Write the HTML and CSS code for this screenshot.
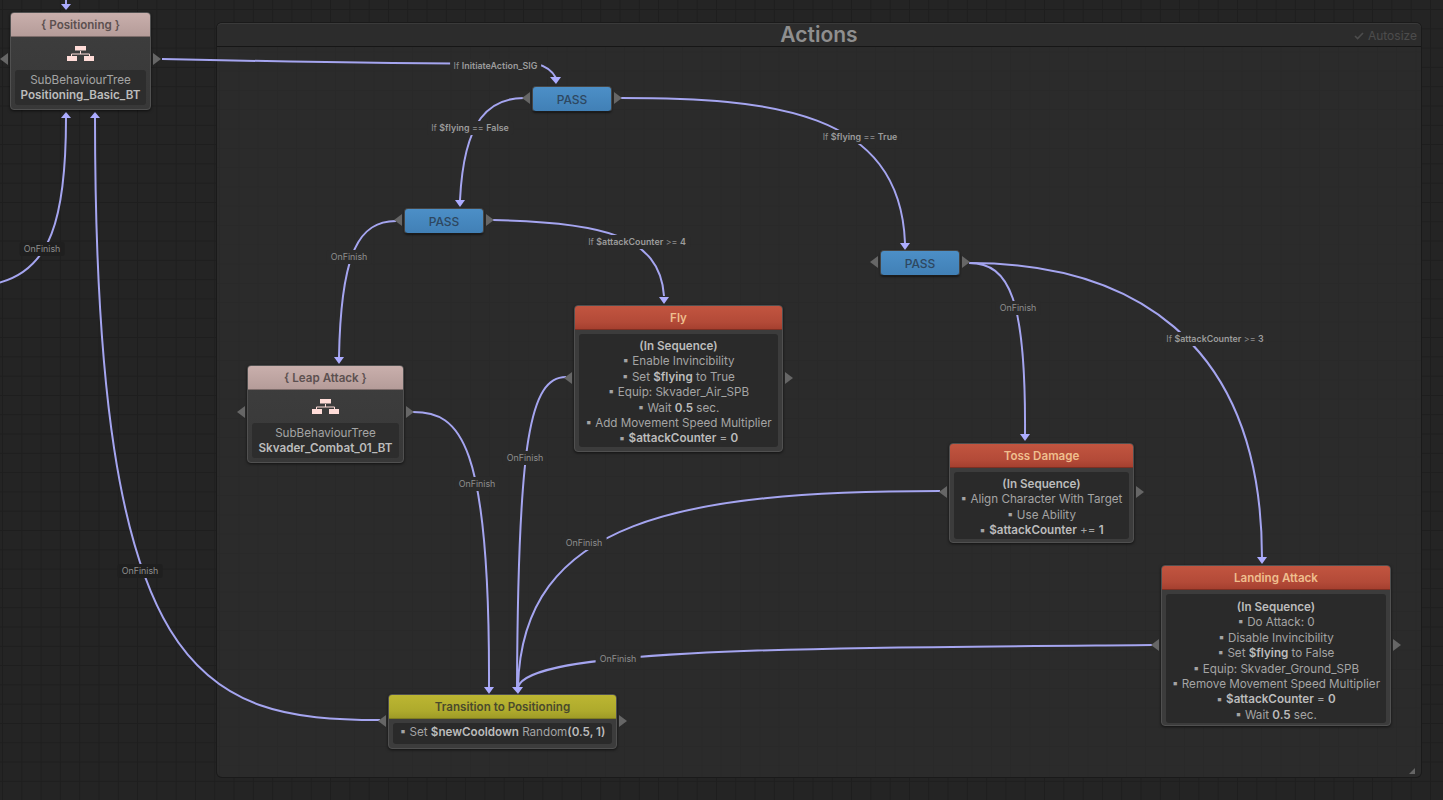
FILE: index.html
```html
<!DOCTYPE html>
<html lang="en">
<head>
<meta charset="utf-8">
<title>Behaviour graph</title>
<link rel="stylesheet" href="styles.css">
</head>
<body>
<main class="canvas">
  <section class="group">
    <header class="group-head">
      <h1 class="group-title">Actions</h1>
      <span class="autosize"><svg class="check" viewBox="0 0 10 8"><path d="M1 4l2.600 2.600L9 1" fill="none" stroke="currentColor" stroke-width="1.600"/></svg>Autosize</span>
    </header>
    <span class="resize"></span>
  </section>

  <svg class="edges" viewBox="0 0 1443 800">
    <g fill="none" stroke="#a5a5f0" stroke-width="2">
      <path d="M162 59C300 62 400 64 537 64C545 66 552 70 556 78"/>
      <path d="M524 98C490 98 464 118 460 200"/>
      <path d="M621 98C770 98 900 110 905 243"/>
      <path d="M396 221C360 221 341 250 339 357"/>
      <path d="M493 220C600 222 660 235 664 296"/>
      <path d="M969 263C1010 263 1026 300 1025 434"/>
      <path d="M969 263C1125 263 1262 335 1262 558"/>
      <path d="M413 412C460 412 490 440 489 687"/>
      <path d="M566 377C530 377 518 440 517 687"/>
      <path d="M940 491C680 491 522 520 518 687"/>
      <path d="M1152 645C800 648 530 648 518 687"/>
      <path d="M380 720C200 720 95 680 95 118"/>
      <path d="M-2 283C50 270 66 220 66 118"/>
      <path d="M66 0V4"/>
    </g>
    <g fill="#acacff">
      <path d="M61 4h10l-5 6z"/>
      <path d="M61 118h10l-5-6z"/>
      <path d="M90 118h10l-5-6z"/>
      <path d="M550 77h11l-5 7z"/>
      <path d="M455 200h10l-5 7z"/>
      <path d="M900 243h10l-5 7z"/>
      <path d="M334 357h10l-5 7z"/>
      <path d="M659 297h10l-5 7z"/>
      <path d="M1020 434h10l-5 7z"/>
      <path d="M1257 557h10l-5 7z"/>
      <path d="M484 687h10l-5 7z"/>
      <path d="M512 687h11l-5 7z"/>
    </g>
  </svg>

  <span class="edge-label l-init">If <b>InitiateAction_SIG</b></span>
  <span class="edge-label l-false">If <b>$flying</b> == <b>False</b></span>
  <span class="edge-label l-true">If <b>$flying</b> == <b>True</b></span>
  <span class="edge-label l-c4">If <b>$attackCounter</b> &gt;= <b>4</b></span>
  <span class="edge-label l-c3">If <b>$attackCounter</b> &gt;= <b>3</b></span>
  <span class="edge-label l-of1">OnFinish</span>
  <span class="edge-label l-of2">OnFinish</span>
  <span class="edge-label l-of3">OnFinish</span>
  <span class="edge-label l-of4">OnFinish</span>
  <span class="edge-label l-of5">OnFinish</span>
  <span class="edge-label l-of6">OnFinish</span>
  <span class="edge-label l-of7">OnFinish</span>
  <span class="edge-label l-of8">OnFinish</span>

  <article class="node sub n-positioning">
    <i class="port in"></i><i class="port out"></i>
    <h2 class="node-head">{ Positioning }</h2>
    <div class="tree-wrap"><svg class="tree" viewBox="0 0 27 16"><path d="M13.500 5v3M4.500 11V8h18v3" fill="none" stroke="#ffdcd8"/><path d="M8 0h11v4.500H8zM0 10h10v5H0zM17 10h10v5H17z" fill="#ffdcd8"/></svg></div>
    <div class="node-body"><p>SubBehaviourTree</p><p><b>Positioning_Basic_BT</b></p></div>
  </article>

  <article class="node sub n-leap">
    <i class="port in"></i><i class="port out"></i>
    <h2 class="node-head">{ Leap Attack }</h2>
    <div class="tree-wrap"><svg class="tree" viewBox="0 0 27 16"><path d="M13.500 5v3M4.500 11V8h18v3" fill="none" stroke="#ffdcd8"/><path d="M8 0h11v4.500H8zM0 10h10v5H0zM17 10h10v5H17z" fill="#ffdcd8"/></svg></div>
    <div class="node-body"><p>SubBehaviourTree</p><p><b>Skvader_Combat_01_BT</b></p></div>
  </article>

  <article class="node red n-fly">
    <i class="port in"></i><i class="port out"></i>
    <h2 class="node-head">Fly</h2>
    <div class="node-body">
      <p><b>(In Sequence)</b></p>
      <p>▪ Enable Invincibility</p>
      <p>▪ Set <b>$flying</b> to True</p>
      <p>▪ Equip: Skvader_Air_SPB</p>
      <p>▪ Wait <b>0.5</b> sec.</p>
      <p>▪ Add Movement Speed Multiplier</p>
      <p>▪ <b>$attackCounter</b> = <b>0</b></p>
    </div>
  </article>

  <article class="node red n-toss">
    <i class="port in"></i><i class="port out"></i>
    <h2 class="node-head">Toss Damage</h2>
    <div class="node-body">
      <p><b>(In Sequence)</b></p>
      <p>▪ Align Character With Target</p>
      <p>▪ Use Ability</p>
      <p>▪ <b>$attackCounter</b> += <b>1</b></p>
    </div>
  </article>

  <article class="node red n-landing">
    <i class="port in"></i><i class="port out"></i>
    <h2 class="node-head">Landing Attack</h2>
    <div class="node-body">
      <p><b>(In Sequence)</b></p>
      <p>▪ Do Attack: 0</p>
      <p>▪ Disable Invincibility</p>
      <p>▪ Set <b>$flying</b> to False</p>
      <p>▪ Equip: Skvader_Ground_SPB</p>
      <p>▪ Remove Movement Speed Multiplier</p>
      <p>▪ <b>$attackCounter</b> = <b>0</b></p>
      <p>▪ Wait <b>0.5</b> sec.</p>
    </div>
  </article>

  <article class="node yellow n-transition">
    <i class="port in"></i><i class="port out"></i>
    <h2 class="node-head">Transition to Positioning</h2>
    <div class="node-body">
      <p>▪ Set <b>$newCooldown</b> Random<b>(0.5, 1)</b></p>
    </div>
  </article>

  <article class="pass p-1"><i class="port in"></i><i class="port out"></i>PASS</article>
  <article class="pass p-2"><i class="port in"></i><i class="port out"></i>PASS</article>
  <article class="pass p-3"><i class="port in"></i><i class="port out"></i>PASS</article>
</main>
</body>
</html>
```
FILE: styles.css
```css
* { box-sizing: border-box; }
html, body { margin: 0; padding: 0; height: 100%; overflow: hidden; }
body { font-family: Inter, "Liberation Sans", sans-serif; background: #232323; }
b { font-weight: 700; }
p { margin: 0; }

.canvas {
  position: relative;
  width: 1443px;
  height: 800px;
  overflow: hidden;
  background-color: #242424;
  background-image:
    linear-gradient(#1e1e1e 1px, transparent 1px),
    linear-gradient(90deg, #1e1e1e 1px, transparent 1px);
  background-size: 19.300px 19.300px;
  background-position: 2px 9px;
}

.group {
  position: absolute;
  left: 217px;
  top: 23px;
  width: 1204px;
  height: 754px;
  background-color: #2b2b2b;
  background-image:
    linear-gradient(#292929 1px, transparent 1px),
    linear-gradient(90deg, #292929 1px, transparent 1px);
  background-size: 19.300px 19.300px;
  background-position: 2px 9px;
  border-radius: 5px;
  box-shadow: 0 0 0 1px #1a1a1a;
}
.group-head {
  display: flex;
  align-items: center;
  justify-content: center;
  height: 24px;
  position: relative;
  background: #2c2c2c;
  border-top: 1px solid #3a3a3a;
  border-bottom: 1px solid #161616;
  border-radius: 5px 5px 0 0;
}
.group-title { margin: 0; font-size: 21px; font-weight: 600; color: #8f8f8f; line-height: 22px; }
.autosize {
  position: absolute;
  right: 4px;
  top: 5px;
  display: flex;
  align-items: center;
  gap: 4px;
  font-size: 12px;
  line-height: 14px;
  color: #4c4c4c;
}
.check { width: 10px; height: 8px; }
.resize {
  position: absolute;
  right: 6px;
  bottom: 3px;
  width: 0;
  height: 0;
  border-left: 6px solid transparent;
  border-bottom: 6px solid #666;
}

.edges { position: absolute; left: 0; top: 0; width: 1443px; height: 800px; pointer-events: none; }

.edge-label {
  position: absolute;
  transform: translate(-50%, -50%);
  padding: 1px 4px;
  font-size: 8.900px;
  line-height: 12px;
  color: #8e8e8e;
  background: #2b2b2b;
  border-radius: 2px;
  white-space: nowrap;
}
.edge-label b { color: #9c9c9c; font-weight: 600; }
.l-init { left: 495.500px; top: 66px; }
.l-false { left: 470px; top: 128px; }
.l-true { left: 860px; top: 137px; }
.l-c4 { left: 637px; top: 242px; }
.l-c3 { left: 1215px; top: 339px; }
.l-of1 { left: 42px; top: 249px; background: #1f1f1f; }
.l-of2 { left: 349px; top: 257px; }
.l-of3 { left: 1018px; top: 308px; }
.l-of4 { left: 525px; top: 458px; }
.l-of5 { left: 477px; top: 484px; }
.l-of6 { left: 584px; top: 543px; }
.l-of7 { left: 140px; top: 571px; background: #1f1f1f; }
.l-of8 { left: 618px; top: 659px; }

.node {
  position: absolute;
  display: flex;
  flex-direction: column;
  background: #3c3c3c;
  border: 1px solid #505050;
  border-radius: 4px;
  box-shadow: 0 1px 3px rgba(0,0,0,.6);
}
.node-head {
  margin: 0;
  flex: 0 0 24px;
  padding-top: 1px;
  display: flex;
  align-items: center;
  justify-content: center;
  font-size: 11.600px;
  font-weight: 600;
  border-radius: 3px 3px 0 0;
}
.node-body {
  flex: 1;
  margin: 4px;
  padding: 5px 0 0;
  background: #2a2a2a;
  border-radius: 3px;
  text-align: center;
  font-size: 11.650px;
  line-height: 15.400px;
  color: #a4a4a4;
  white-space: nowrap;
}
.node-body b { color: #bcbcbc; font-weight: 600; }
.n-landing .node-body { padding-top: 6px; }

.red .node-head {
  color: #efbe8e;
  background: linear-gradient(#c25540, #b34a38 70%, #a5402f);
  border-bottom: 1px solid #7c2f23;
}
.yellow .node-head {
  color: #4a4a2c;
  background: linear-gradient(#bcb632, #aeaa2c 70%, #9f9b27);
  border-bottom: 1px solid #7f7c20;
}
.sub .node-head {
  color: #5c5050;
  background: linear-gradient(#c9afac, #b59c99);
  border-bottom: 1px solid #7d6c6a;
}
.sub .node-body { margin-top: 0; padding-top: 3px; background: #2d2d2d; }
.sub { background: linear-gradient(#3e3e3e, #383838); }
.tree-wrap { flex: 0 0 33px; display: flex; align-items: center; justify-content: center; }
.tree { width: 27px; height: 16px; display: block; }
.yellow .node-body { padding-top: 2px; }

.n-positioning { left: 10px; top: 12px; width: 141px; height: 98px; }
.n-leap { left: 247px; top: 365px; width: 157px; height: 98px; }
.n-fly { left: 574px; top: 305px; width: 209px; height: 147px; }
.n-toss { left: 949px; top: 443px; width: 185px; height: 100px; }
.n-landing { left: 1161px; top: 565px; width: 230px; height: 161px; }
.n-transition { left: 388px; top: 694px; width: 229px; height: 55px; }

.pass {
  position: absolute;
  width: 80px;
  height: 26px;
  display: flex;
  align-items: center;
  justify-content: center;
  font-size: 12px;
  font-weight: 500;
  color: #2e4760;
  background: linear-gradient(#4c8fc7, #4180b6);
  border: 1px solid #454545;
  border-bottom-color: #1c1c1c;
  border-radius: 4px;
  box-shadow: 0 1px 2px rgba(0,0,0,.5);
}
.p-1 { left: 532px; top: 86px; }
.p-2 { left: 404px; top: 208px; }
.p-3 { left: 880px; top: 250px; }

.port {
  position: absolute;
  top: 50%;
  width: 0;
  height: 0;
  margin-top: -7px;
  border-top: 6.500px solid transparent;
  border-bottom: 6.500px solid transparent;
}
.port.in { left: -11px; border-right: 8px solid #666; }
.port.out { right: -11px; border-left: 8px solid #666; }
.sub .port { top: 47px; }
```
